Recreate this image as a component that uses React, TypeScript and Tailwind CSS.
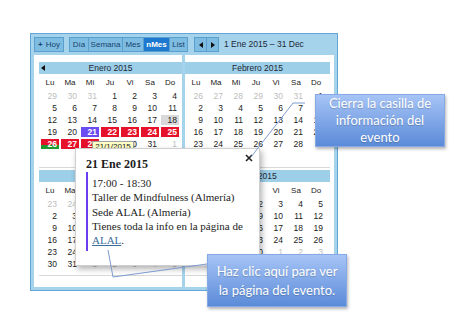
import React from 'react';

const enero = [
  '29m 30m 31m 1 2 3 4',
  '5 6 7 8 9 10 11',
  '12 13 14 15 16 17 18g',
  '19 20 21p 22r 23r 24r 25r',
  '26s 27r 28r 29 30 31 1m',
  '',
];
const febrero = [
  '26m 27m 28m 29m 30m 31m 1',
  '2 3 4 5 6 7 8',
  '9 10 11 12 13 14 15',
  '16 17 18 19 20 21 22',
  '23 24 25 26 27 28 1m',
  '',
];
const marzo = [
  '23m 24m 25m 26m 27m 28m 1',
  '2 3 4 5 6 7 8',
  '9 10 11 12 13 14 15',
  '16 17 18 19 20 21 22',
  '23 24 25 26 27 28 29',
  '30 31 1m 2m 3m 4m 5m',
];
const abril = [
  '30m 31m 1 2 3 4 5',
  '6 7 8 9 10 11 12',
  '13 14 15 16 17 18 19',
  '20 21 22 23 24 25 26',
  '27 28 29 30 1m 2m 3m',
  '',
];

const dayNames = ['Lu', 'Ma', 'Mi', 'Ju', 'Vi', 'Sa', 'Do'];

function Day({ s }: { s: string }) {
  const num = s.replace(/[a-z]/g, '');
  const flag = s.replace(/\d+/g, '');
  let cls = 'text-[#222]';
  if (flag === 'm') cls = 'text-[#bdbdbd]';
  if (flag === 'p') cls = 'bg-[#6a4cf2] text-white font-bold';
  if (flag === 'r') cls = 'bg-[#e6112b] text-white font-bold';
  if (flag === 's') cls = 'bg-[linear-gradient(#e6112b_55%,#1f9930_55%)] text-white font-bold';
  if (flag === 'g') cls = 'bg-[#d9d9d9] text-[#222]';
  return (
    <div className="h-[12px] p-px">
      <div className={`h-full pr-[2px] text-right leading-[10px] ${cls}`}>{num}</div>
    </div>
  );
}

function Month({ title, rows, arrow }: { title: string; rows: string[]; arrow?: boolean }) {
  return (
    <div className="pt-[2px] pb-[5px] border-b border-[#d8d8d8]">
      <div className="relative h-[12px] bg-[#9dcfe9] text-center text-[8.5px] leading-[12px] text-[#1d2833]">
        {arrow && (
          <span className="absolute left-[2px] top-[3px] w-0 h-0 border-y-[3px] border-y-transparent border-r-[4px] border-r-[#111]" />
        )}
        {title}
      </div>
      <div className="mt-[3px] grid grid-cols-[repeat(7,20px)] pl-px h-[13px] text-[8px] leading-[12px] text-[#222] text-center">
        {dayNames.map((d) => (
          <div key={d}>{d}</div>
        ))}
      </div>
      <div className="pl-px text-[8.5px]">
        {rows.map((r, i) => (
          <div key={i} className="grid grid-cols-[repeat(7,20px)] h-[12px]">
            {r.split(' ').filter(Boolean).map((s, j) => (
              <Day key={j} s={s} />
            ))}
          </div>
        ))}
      </div>
    </div>
  );
}

function Btn({ children, w, active, first }: { children: React.ReactNode; w: string; active?: boolean; first?: boolean }) {
  return (
    <div
      className={`${w} h-[15px] flex items-center justify-center border border-[#5b9fcf] text-[8px] ${
        first ? '' : '-ml-px'
      } ${active ? 'bg-[#1d78cf] text-white font-bold' : 'bg-[#7ebce2] text-[#17456d]'}`}
    >
      {children}
    </div>
  );
}

export default function App() {
  return (
    <div
      className="relative w-[460px] h-[327px] overflow-hidden bg-white"
      style={{ fontFamily: '"Liberation Sans", Arial, sans-serif' }}
    >
      {/* calendar frame */}
      <div className="ml-[30px] mt-[33px] w-[308px] h-[258px] border border-[#62a7d7] bg-[#a6d3ec] px-[3px] pt-[3px] pb-[3px] flex flex-col">
        {/* toolbar */}
        <div className="flex items-center h-[15px]">
          <Btn w="w-[30px]" first>
            <span className="font-bold mr-[3px]">+</span>Hoy
          </Btn>
          <div className="flex ml-[5px]">
            <Btn w="w-[20px]" first>Día</Btn>
            <Btn w="w-[35px]">Semana</Btn>
            <Btn w="w-[22px]">Mes</Btn>
            <Btn w="w-[27px]" active>nMes</Btn>
            <Btn w="w-[19px]">List</Btn>
          </div>
          <div className="flex ml-[6px]">
            <Btn w="w-[13px]" first>
              <span className="w-0 h-0 border-y-[3px] border-y-transparent border-r-[4px] border-r-[#111]" />
            </Btn>
            <Btn w="w-[13px]">
              <span className="w-0 h-0 border-y-[3px] border-y-transparent border-l-[4px] border-l-[#111]" />
            </Btn>
          </div>
          <div className="ml-[5px] text-[8.5px] text-[#1b2836]">1 Ene 2015 – 31 Dec</div>
        </div>

        {/* months */}
        <div className="mt-[3px] flex-1 flex bg-white">
          <div className="w-[148px] pl-[5px] pt-[5px]">
            <Month title="Enero 2015" rows={enero} arrow />
            <Month title="Marzo 2015" rows={marzo} />
          </div>
          <div className="w-[3px] bg-[#a6d3ec]" />
          <div className="w-[145px] pt-[5px]">
            <Month title="Febrero 2015" rows={febrero} />
            <Month title="Abril 2015" rows={abril} />
          </div>
        </div>
      </div>

      {/* date tooltip */}
      <div className="absolute left-[92px] top-[141px] w-[42px] h-[12px] border border-[#a0a0a0] bg-[#ffffc6] text-[8px] leading-[10px] text-center text-[#222] shadow-[1px_1px_2px_rgba(0,0,0,0.25)]">
        21/1/2015
      </div>

      {/* event popup */}
      <div
        className="absolute left-[75px] top-[148px] w-[185px] h-[118px] bg-white border border-[#cfcfcf] shadow-[2px_3px_6px_rgba(0,0,0,0.3)] pl-[10px] pt-[8px] text-[#1c1c1c]"
        style={{ fontFamily: '"Liberation Serif", "Times New Roman", serif' }}
      >
        <div className="text-[12px] font-bold leading-[14px]">21 Ene 2015</div>
        <div className="mt-px border-l-2 border-[#6a3ef0] pl-[4px] pt-[4px] pb-[4px] text-[11px] leading-[14.3px]">
          <div>17:00 - 18:30</div>
          <div>Taller de Mindfulness (Almería)</div>
          <div>Sede ALAL (Almería)</div>
          <div>Tienes toda la info en la página de</div>
          <div>
            <span className="text-[#3b6d9c] underline">ALAL</span>.
          </div>
        </div>
        <svg className="absolute left-[169px] top-[5px]" width="8" height="8" viewBox="0 0 8 8">
          <path d="M1 1L7 7M7 1L1 7" stroke="#222" strokeWidth="1.6" />
        </svg>
      </div>

      {/* callout lines */}
      <svg className="absolute left-0 top-0 pointer-events-none" width="460" height="327">
        <polyline points="305,103 293,103 251,157" fill="none" stroke="#7c9bd0" strokeWidth="1" />
        <polyline points="108,250 113,277 207,264" fill="none" stroke="#7c9bd0" strokeWidth="1" />
      </svg>

      {/* callouts */}
      <div
        className="absolute left-[315px] top-[94px] w-[130px] h-[53px] flex items-center justify-center text-center text-white text-[13px] leading-[17px] bg-gradient-to-b from-[#a7c4f6] to-[#5b8bd8] border border-[#86a8e6] shadow-[1px_2px_3px_rgba(0,0,0,0.3)]"
        style={{ fontFamily: 'Lato, "Liberation Sans", sans-serif', textShadow: '0 1px 1px rgba(0,0,0,0.2)' }}
      >
        <div>
          Cierra la casilla de
          <br />
          información del
          <br />
          evento
        </div>
      </div>
      <div
        className="absolute left-[207px] top-[254px] w-[140px] h-[53px] flex items-center justify-center text-center text-white text-[13px] leading-[19px] bg-gradient-to-b from-[#a7c4f6] to-[#5b8bd8] border border-[#86a8e6] shadow-[1px_2px_3px_rgba(0,0,0,0.3)]"
        style={{ fontFamily: 'Lato, "Liberation Sans", sans-serif', textShadow: '0 1px 1px rgba(0,0,0,0.2)' }}
      >
        <div>
          Haz clic aquí para ver
          <br />
          la página del evento.
        </div>
      </div>
    </div>
  );
}
